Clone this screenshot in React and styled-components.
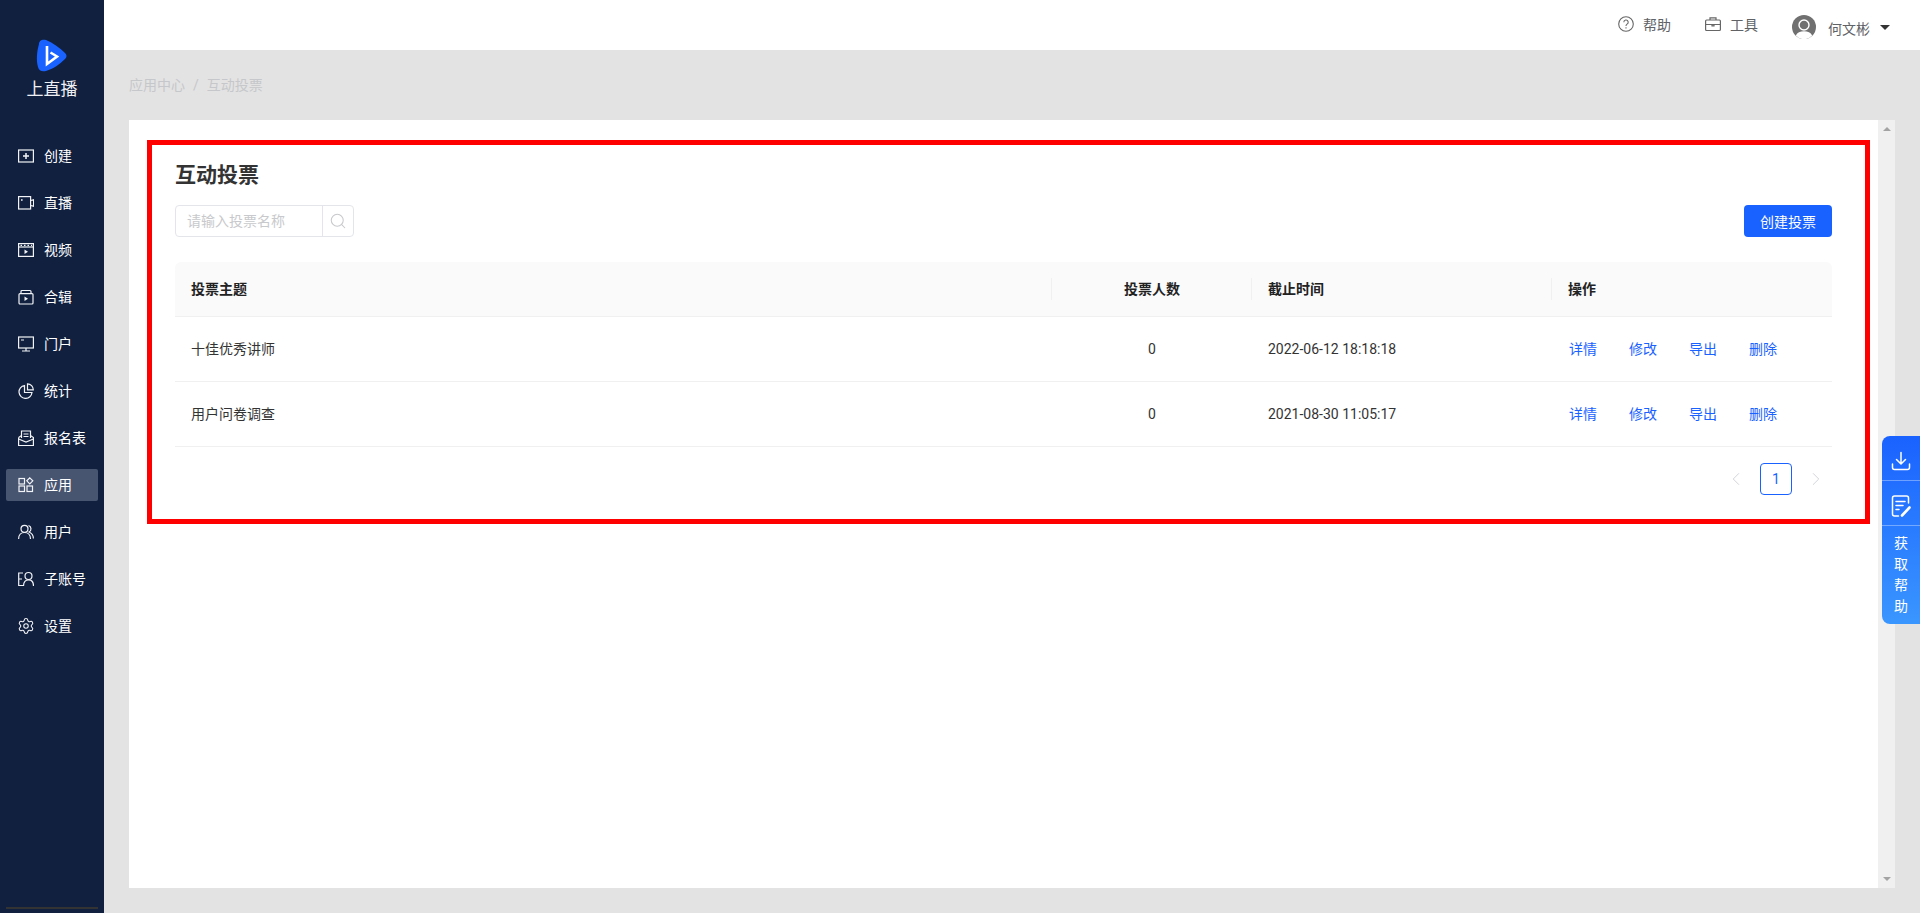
import React from 'react';
import styled, { createGlobalStyle } from 'styled-components';
import { Search, Settings, ChevronLeft, ChevronRight } from 'lucide-react';

const GlobalStyle = createGlobalStyle`
  html, body {
    margin: 0;
    padding: 0;
    height: 100%;
    overflow: hidden;
    background: #e3e3e3;
    font-family: Roboto, "Noto Sans CJK SC", sans-serif;
    font-size: 14px;
  }
  * { box-sizing: border-box; }
`;

const Layout = styled.div`
  position: relative;
  display: flex;
  width: 1920px;
  height: 913px;
  overflow: hidden;
`;

const Sidebar = styled.aside`
  position: relative;
  width: 104px;
  flex-shrink: 0;
  background: #11203f;
  color: #fff;
  padding: 0 6px;
`;

const Brand = styled.div`
  display: flex;
  flex-direction: column;
  align-items: center;
  padding-top: 39px;
  height: 124px;
  margin-bottom: 16px;
`;

const BrandName = styled.div`
  font-size: 17px;
  line-height: 22px;
  margin-top: 5px;
  color: #eef0f4;
`;

const NavItem = styled.div`
  display: flex;
  align-items: center;
  height: 32px;
  margin-bottom: 15px;
  padding-left: 12px;
  gap: 10px;
  border-radius: 2px;
  line-height: 32px;
  background: ${props => props.active ? '#475571' : 'transparent'};
  svg { width: 16px; height: 16px; flex-shrink: 0; color: #f2f3f6; }
`;

const GearIcon = styled(Settings)`
  && { width: 18px; height: 18px; margin: 0 -1px; }
`;

const SideScroll = styled.div`
  position: absolute;
  left: 6px;
  right: 6px;
  bottom: 4px;
  height: 2px;
  background: #333;
`;

const Main = styled.div`
  flex: 1;
  display: flex;
  flex-direction: column;
  min-width: 0;
`;

const TopBar = styled.header`
  height: 50px;
  background: #fff;
  flex-shrink: 0;
  display: flex;
  align-items: center;
  justify-content: flex-end;
  padding-right: 30px;
  color: #606266;
`;

const TopItem = styled.div`
  display: flex;
  align-items: center;
  gap: 9px;
  margin-left: 34px;
  margin-top: -2px;
  svg { width: 16px; height: 16px; }
`;

const UserBox = styled.div`
  display: flex;
  align-items: center;
  margin-left: 34px;
  margin-top: 3px;
`;

const UserName = styled.span`
  margin-left: 12px;
  margin-right: 10px;
  margin-top: 2px;
`;

const Caret = styled.i`
  display: block;
  width: 0;
  height: 0;
  border-left: 5px solid transparent;
  border-right: 5px solid transparent;
  border-top: 5px solid #333;
  margin-top: 1px;
`;

const Crumbs = styled.div`
  height: 70px;
  padding-left: 25px;
  padding-top: 24px;
  line-height: 22px;
  color: #c6c7ca;
  flex-shrink: 0;
  display: flex;
  gap: 8px;
`;

const Panel = styled.section`
  display: flex;
  height: 768px;
  margin: 0 25px;
  background: #fff;
`;

const Content = styled.div`
  flex: 1;
  min-width: 0;
  padding: 40px 46px 0;
`;

const Title = styled.h1`
  margin: 0 0 15px;
  font-size: 21px;
  line-height: 30px;
  font-weight: 700;
  color: #333;
`;

const Toolbar = styled.div`
  display: flex;
  justify-content: space-between;
  margin-bottom: 25px;
`;

const SearchBox = styled.div`
  display: flex;
  width: 179px;
  height: 32px;
  border: 1px solid #e3e5ea;
  border-radius: 4px;
`;

const SearchInput = styled.input`
  flex: 1;
  min-width: 0;
  border: 0;
  outline: 0;
  padding: 0 11px;
  background: transparent;
  font: inherit;
  &::placeholder { color: #c8c9cc; opacity: 1; }
`;

const SearchButton = styled.div`
  width: 31px;
  border-left: 1px solid #e3e5ea;
  display: flex;
  align-items: center;
  justify-content: center;
  color: #c8c9cc;
`;

const PrimaryButton = styled.button`
  width: 88px;
  height: 32px;
  border: 0;
  border-radius: 4px;
  background: #1a62ff;
  color: #fff;
  font: inherit;
`;

const Table = styled.table`
  width: 100%;
  table-layout: fixed;
  border-collapse: separate;
  border-spacing: 0;
`;

const Th = styled.th`
  position: relative;
  height: 55px;
  padding: 0 16px 2px;
  background: #fafafa;
  border-bottom: 1px solid #f0f0f0;
  font-weight: 700;
  color: #222;
  text-align: ${props => props.center ? 'center' : 'left'};
  &:first-child { border-top-left-radius: 6px; }
  &:last-child { border-top-right-radius: 6px; }
  &:not(:last-child)::after {
    content: '';
    position: absolute;
    right: 0;
    top: 16px;
    width: 1px;
    height: 22px;
    background: #f0f0f0;
  }
`;

const Td = styled.td`
  height: 65px;
  padding: 0 16px ${props => props.numeric ? 0 : 2}px;
  border-bottom: 1px solid #f0f0f0;
  color: #333;
  text-align: ${props => props.center ? 'center' : 'left'};
`;

const Actions = styled.div`
  display: flex;
  gap: 32px;
  padding-left: 1px;
`;

const ActionLink = styled.a`
  color: #1a62ff;
  cursor: pointer;
`;

const Pager = styled.div`
  display: flex;
  justify-content: flex-end;
  gap: 8px;
  margin-top: 16px;
`;

const PageArrow = styled.div`
  width: 32px;
  height: 32px;
  display: flex;
  align-items: center;
  justify-content: center;
  color: #cfd1d6;
`;

const PageNumber = styled.div`
  width: 32px;
  height: 32px;
  display: flex;
  align-items: center;
  justify-content: center;
  border: 1px solid #1a62ff;
  border-radius: 4px;
  color: #1a62ff;
`;

const ScrollTrack = styled.div`
  width: 17px;
  flex-shrink: 0;
  background: #f0f0f0;
  display: flex;
  flex-direction: column;
  justify-content: space-between;
  align-items: center;
  padding: 7px 0;
`;

const ScrollArrow = styled.i`
  display: block;
  width: 0;
  height: 0;
  border-left: 4px solid transparent;
  border-right: 4px solid transparent;
  border-${props => props.down ? 'top' : 'bottom'}: 4px solid #a3a3a3;
`;

/* annotation drawn on top of the screenshot */
const Highlight = styled.div`
  position: absolute;
  left: 147px;
  top: 140px;
  width: 1723px;
  height: 384px;
  border: 5px solid #f00;
  pointer-events: none;
`;

const HelpDock = styled.div`
  position: absolute;
  right: 0;
  top: 436px;
  width: 38px;
  height: 188px;
  border-radius: 8px 0 0 8px;
  background: linear-gradient(180deg, #1a62ff 0%, #3a96ff 100%);
  color: #fff;
  display: flex;
  flex-direction: column;
`;

const DockIcon = styled.div`
  height: 45px;
  padding-top: 5px;
  display: flex;
  align-items: center;
  justify-content: center;
  border-bottom: 1px solid rgba(255, 255, 255, 0.35);
  flex-shrink: 0;
`;

const DockText = styled.div`
  width: 14px;
  margin: 7px auto 0;
  line-height: 21px;
  text-align: center;
`;

const Logo = () => (
  <svg width="32" height="34" viewBox="0 0 32 34">
    <path d="M3 5C3 1 7 0 10 1C17 4 24 9 29 14C31 16 31 18 29 20C24 25 17 30 10 32C6 33 3 32 2 28C0 21 1 12 3 5Z" fill="#1a62ff" />
    <path d="M11 7V25L21 17.5L14.5 13.5" fill="none" stroke="#fff" strokeWidth="2.6" />
  </svg>
);

const icons = {
  create: <><rect x="0.6" y="2" width="14.8" height="12" /><path d="M8 5v6M5 8h6" strokeWidth="1.5" /></>,
  live: <><rect x="0.6" y="1.6" width="12" height="12.4" /><path d="M12.6 5.5l3 -0.7v6.4l-3 -0.7" /><path d="M3 5h1.6" strokeWidth="1.6" /></>,
  video: <><rect x="0.6" y="1.6" width="14.8" height="12.8" /><path d="M1 5h14" /><path d="M2.5 3.3h1.5M6 3.3h1.5M9.5 3.3h1.5M13 3.3h1" strokeWidth="1.3" /><path d="M6.5 7.5v4.5l3.5 -2.2z" fill="currentColor" stroke="none" /></>,
  album: <><rect x="1" y="4.6" width="14" height="10.4" rx="1" /><path d="M3 4.6V2.5q0 -1 1 -1h8q1 0 1 1v2.1" /><path d="M6.5 7.5v4.5l3.5 -2.2z" fill="currentColor" stroke="none" /></>,
  portal: <><rect x="0.6" y="1" width="14.8" height="11" /><path d="M8 12v2.5M4 15h8M3 4h3" /></>,
  stats: <><path d="M6.5 2.5A6.5 6.5 0 1 0 14 9.5H6.5z" /><path d="M9.5 0.8v6h5.8A6 6 0 0 0 9.5 0.8z" /></>,
  form: <><path d="M0.6 7.5v8h14.8v-8l-3 -2" /><path d="M0.6 7.5l3 -2M0.6 9l7.4 3l7.4 -3" /><path d="M3.5 8V1h9v7M5.5 4h5M5.5 6.5h5" /></>,
  apps: <><rect x="1" y="1.5" width="5.5" height="5.5" /><rect x="1" y="9" width="5.5" height="5.5" /><rect x="9" y="9" width="5.5" height="5.5" /><path d="M11.8 0.8l3 3l-3 3l-3 -3z" /></>,
  users: <><circle cx="6.5" cy="4.8" r="3.5" /><path d="M0.6 15c0 -4 2.5 -6.5 5.9 -6.5s6 2.5 6 6.5" /><path d="M10.5 1.5a3.5 3.5 0 0 1 0.5 6.5c2.5 1 4.4 3.2 4.4 6.5" /></>,
  account: <><path d="M5 2H0.7V14.5H5M0.7 8H4" /><circle cx="10.5" cy="5" r="3.5" /><path d="M5.5 15c0 -4 2 -6.2 5 -6.2s5 2.2 5 6.2" /></>,
};

const NavIcon = ({ name }) => (
  <svg viewBox="0 0 16 16" fill="none" stroke="currentColor" strokeWidth="1.2">
    {icons[name]}
  </svg>
);

const navItems = [
  { label: '创建', icon: 'create' },
  { label: '直播', icon: 'live' },
  { label: '视频', icon: 'video' },
  { label: '合辑', icon: 'album' },
  { label: '门户', icon: 'portal' },
  { label: '统计', icon: 'stats' },
  { label: '报名表', icon: 'form' },
  { label: '应用', icon: 'apps', active: true },
  { label: '用户', icon: 'users' },
  { label: '子账号', icon: 'account' },
  { label: '设置', icon: 'settings' },
];

const votes = [
  { id: 1, title: '十佳优秀讲师', count: 0, deadline: '2022-06-12 18:18:18' },
  { id: 2, title: '用户问卷调查', count: 0, deadline: '2021-08-30 11:05:17' },
];

const App = () => (
  <Layout>
    <GlobalStyle />
    <Sidebar>
      <Brand>
        <Logo />
        <BrandName>上直播</BrandName>
      </Brand>
      {navItems.map(item => (
        <NavItem key={item.label} active={item.active}>
          {item.icon === 'settings' ? <GearIcon strokeWidth={1.4} /> : <NavIcon name={item.icon} />}
          {item.label}
        </NavItem>
      ))}
      <SideScroll />
    </Sidebar>
    <Main>
      <TopBar>
        <TopItem>
          <svg viewBox="0 0 16 16" fill="none" stroke="#666" strokeWidth="1.1">
            <circle cx="8" cy="8" r="7.3" />
            <path d="M5.8 6.2a2.2 2.2 0 1 1 3.3 1.9c-.8.5-1.1.9-1.1 1.8" />
            <path d="M8 11.2v1.2" />
          </svg>
          帮助
        </TopItem>
        <TopItem>
          <svg viewBox="0 0 16 16" fill="none" stroke="#666" strokeWidth="1.2">
            <rect x="0.6" y="4" width="14.8" height="10.5" rx="1" />
            <path d="M5 4V1.8h6V4M0.6 8.5h14.8M7 8.5h2v1.3H7z" />
          </svg>
          工具
        </TopItem>
        <UserBox>
          <svg width="24" height="24" viewBox="0 0 24 24">
            <circle cx="12" cy="12" r="12" fill="#707070" />
            <circle cx="12" cy="10" r="5" fill="none" stroke="#fff" strokeWidth="1.4" />
            <path d="M3.8 20.5c1.5 -3 4.3 -4.3 8.2 -4.3s6.7 1.3 8.2 4.3a11 11 0 0 1 -16.4 0z" fill="#fff" />
          </svg>
          <UserName>何文彬</UserName>
          <Caret />
        </UserBox>
      </TopBar>
      <Crumbs>
        <span>应用中心</span>
        <span>/</span>
        <span>互动投票</span>
      </Crumbs>
      <Panel>
        <Content>
          <Title>互动投票</Title>
          <Toolbar>
            <SearchBox>
              <SearchInput placeholder="请输入投票名称" />
              <SearchButton><Search size={18} strokeWidth={1.4} /></SearchButton>
            </SearchBox>
            <PrimaryButton>创建投票</PrimaryButton>
          </Toolbar>
          <Table>
            <colgroup>
              <col style={{ width: 877 }} />
              <col style={{ width: 200 }} />
              <col style={{ width: 300 }} />
              <col style={{ width: 280 }} />
            </colgroup>
            <thead>
              <tr>
                <Th>投票主题</Th>
                <Th center>投票人数</Th>
                <Th>截止时间</Th>
                <Th>操作</Th>
              </tr>
            </thead>
            <tbody>
              {votes.map(vote => (
                <tr key={vote.id}>
                  <Td>{vote.title}</Td>
                  <Td center numeric>{vote.count}</Td>
                  <Td numeric>{vote.deadline}</Td>
                  <Td>
                    <Actions>
                      <ActionLink>详情</ActionLink>
                      <ActionLink>修改</ActionLink>
                      <ActionLink>导出</ActionLink>
                      <ActionLink>删除</ActionLink>
                    </Actions>
                  </Td>
                </tr>
              ))}
            </tbody>
          </Table>
          <Pager>
            <PageArrow><ChevronLeft size={22} strokeWidth={1} /></PageArrow>
            <PageNumber>1</PageNumber>
            <PageArrow><ChevronRight size={22} strokeWidth={1} /></PageArrow>
          </Pager>
        </Content>
        <ScrollTrack>
          <ScrollArrow />
          <ScrollArrow down />
        </ScrollTrack>
      </Panel>
    </Main>
    <Highlight />
    <HelpDock>
      <DockIcon>
        <svg width="20" height="20" viewBox="0 0 20 20" fill="none" stroke="#fff" strokeWidth="1.5" strokeLinecap="round" strokeLinejoin="round">
          <path d="M10 1.5v11M5.5 8.5l4.5 4.5l4.500 -4.500" />
          <path d="M1.5 13v3.5q0 2 2 2h13q2 0 2 -2V13" />
        </svg>
      </DockIcon>
      <DockIcon>
        <svg width="20" height="22" viewBox="0 0 20 22" fill="none" stroke="#fff" strokeWidth="1.5" strokeLinecap="round" strokeLinejoin="round">
          <path d="M17.5 8V3q0 -2 -2 -2h-12q-2 0 -2 2v16q0 2 2 2h4" />
          <path d="M5 6.5h9M5 10.5h7M5 14.5h3" />
          <path d="M11 20.5l7.5 -8" strokeWidth="2.6" />
        </svg>
      </DockIcon>
      <DockText>获取帮助</DockText>
    </HelpDock>
  </Layout>
);

export default App;
